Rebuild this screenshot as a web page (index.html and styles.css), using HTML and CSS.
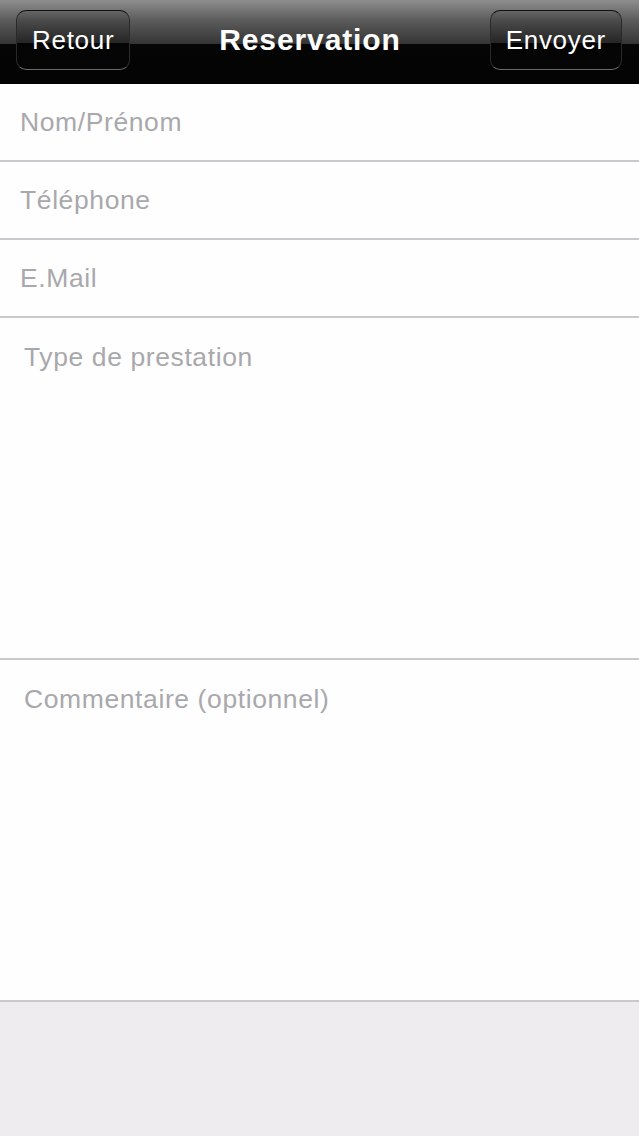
FILE: index.html
```html
<!DOCTYPE html>
<html lang="fr">
<head>
    <meta charset="UTF-8">
    <meta name="viewport" content="width=device-width, initial-scale=1.0">
    <title>Reservation</title>
    <link rel="stylesheet" href="styles.css">
</head>
<body>
    <div class="navbar">
        <button class="nav-btn" type="button">Retour</button>
        <h1 class="nav-title">Reservation</h1>
        <button class="nav-btn" type="submit" form="reservationForm">Envoyer</button>
    </div>

    <form id="reservationForm" class="form">
        <div class="field">
            <input type="text" placeholder="Nom/Prénom">
        </div>
        <div class="field">
            <input type="tel" placeholder="Téléphone">
        </div>
        <div class="field">
            <input type="email" placeholder="E.Mail">
        </div>
        <div class="field area">
            <textarea placeholder="Type de prestation"></textarea>
        </div>
        <div class="field area">
            <textarea placeholder="Commentaire (optionnel)"></textarea>
        </div>
    </form>
</body>
</html>
```

FILE: styles.css
```css
html, body {
    margin: 0;
    padding: 0;
}
body {
    font-family: "Liberation Sans", Arial, sans-serif;
    background-color: #eeecef;
    min-height: 1136px;
}
.navbar {
    height: 84px;
    box-sizing: border-box;
    padding: 10px 17px 14px 16px;
    display: flex;
    align-items: stretch;
    justify-content: space-between;
    background: linear-gradient(to bottom, #8e8e8e 0%, #5a5a5a 25%, #353535 52%, #050505 53%, #030303 100%);
}
.nav-title {
    margin: 0;
    align-self: center;
    color: #fff;
    font-size: 30px;
    font-weight: bold;
    letter-spacing: 0.9px;
}
.nav-btn {
    font-family: inherit;
    font-size: 26px;
    letter-spacing: 0.7px;
    color: #fff;
    padding: 0 15px;
    border: 1.5px solid;
    border-color: #111 #2a2a2a #6a6a6a;
    border-radius: 10px;
    background: linear-gradient(to bottom, rgba(0,0,0,0.12) 0%, rgba(0,0,0,0.3) 55%, #040404 56%, #060606 100%);
    cursor: pointer;
}
.form {
    display: flex;
    flex-direction: column;
}
.field {
    height: 78px;
    box-sizing: border-box;
    background-color: #fefefe;
    border-bottom: 2px solid #c9c8cd;
    display: flex;
}
.field.area {
    height: 342px;
}
.field input,
.field textarea {
    flex: 1;
    border: none;
    outline: none;
    background: transparent;
    font-family: inherit;
    font-size: 26.5px;
    letter-spacing: 0.6px;
    color: #333;
    padding: 0 20px;
}
.field textarea {
    resize: none;
    padding: 24px 24px 0;
    line-height: 30px;
}
::placeholder {
    color: #a9a8ac;
    opacity: 1;
}
```
